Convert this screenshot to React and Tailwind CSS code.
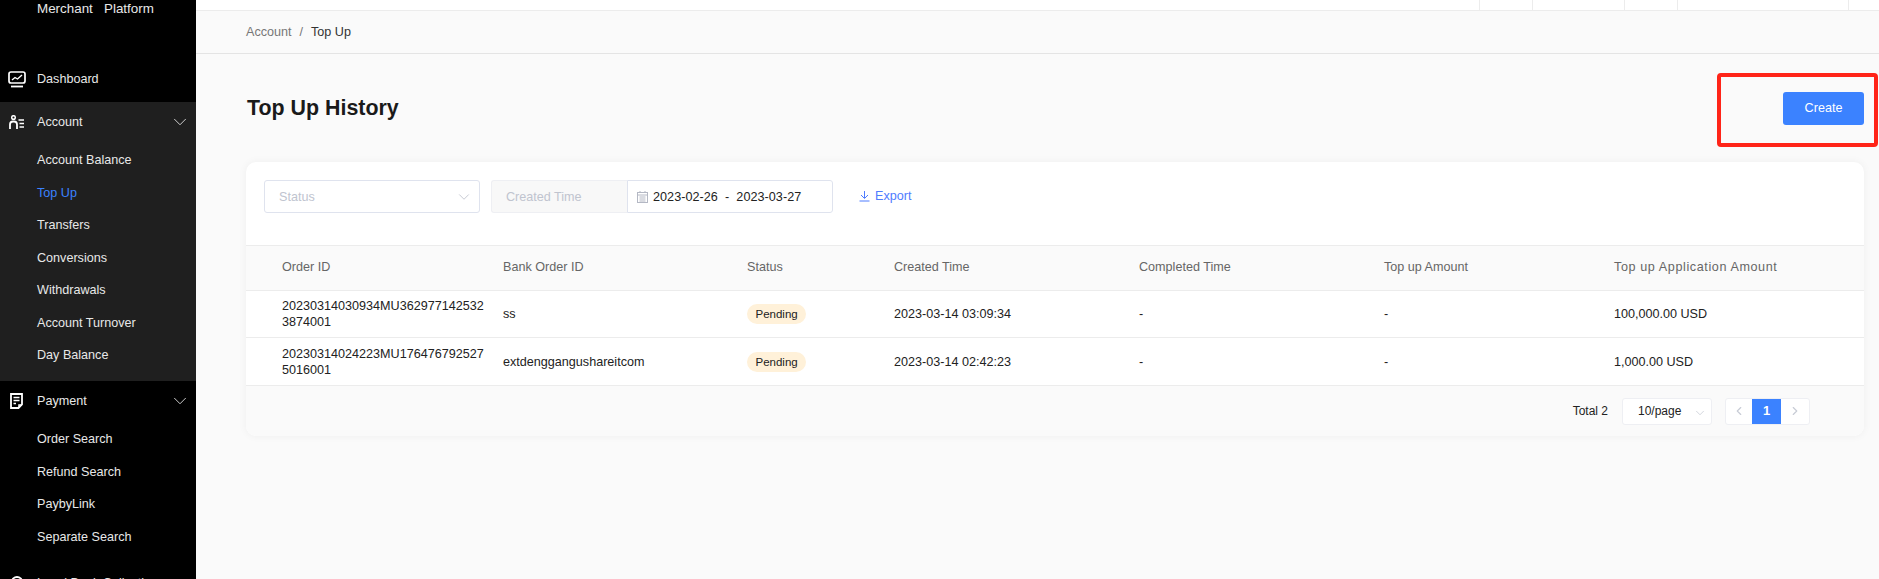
import { ChevronDown, ChevronLeft, ChevronRight } from 'lucide-react';

const FONT = "font-['Liberation_Sans',Arial,sans-serif]";

const rows = [
  { id: '20230314030934MU3629771425323874001', bank: 'ss', created: '2023-03-14 03:09:34', amount: '100,000.00 USD', height: 'h-[47px]' },
  { id: '20230314024223MU1764767925275016001', bank: 'extdenggangushareitcom', created: '2023-03-14 02:42:23', amount: '1,000.00 USD', height: 'h-[48px]' },
];

const headers = ['Order ID', 'Bank Order ID', 'Status', 'Created Time', 'Completed Time', 'Top up Amount', 'Top up Application Amount'];

const COLS = 'grid grid-cols-[257px_244px_147px_245px_245px_230px_1fr] items-center';

function DashboardIcon() {
  return (
    <svg width="18" height="17" viewBox="0 0 18 17" fill="none">
      <rect x="1" y="1" width="16" height="11" rx="2" stroke="#fff" strokeWidth="1.7" />
      <path d="M4 9 L7 6.5 L9.5 8 L14 4" stroke="#fff" strokeWidth="1.4" />
      <path d="M3 15.5 H15" stroke="#fff" strokeWidth="1.8" />
    </svg>
  );
}

function AccountIcon() {
  return (
    <svg width="15" height="14" viewBox="0 0 15 14" fill="none">
      <circle cx="4.5" cy="2.5" r="1.8" stroke="#fff" strokeWidth="1.5" />
      <path d="M1 14 V9.5 Q1 6.5 4 6.5 H5 Q8 6.5 8 9.5 V14" stroke="#fff" strokeWidth="1.8" />
      <path d="M9.5 5 H15 M10.5 8.5 H15 M10.5 12 H15" stroke="#fff" strokeWidth="1.5" />
    </svg>
  );
}

function PaymentIcon() {
  return (
    <svg width="13" height="16" viewBox="0 0 13 16" fill="none">
      <path d="M1 1 H12 V11.5 L8.5 15 H1 Z" stroke="#fff" strokeWidth="1.8" />
      <path d="M3.5 4.5 H9.5 M3.5 7.5 H9.5 M3.5 10.5 H6" stroke="#fff" strokeWidth="1.5" />
      <path d="M9 15 V12 H12" stroke="#fff" strokeWidth="1.5" />
    </svg>
  );
}

function CalendarIcon() {
  return (
    <svg width="11" height="12" viewBox="0 0 11 12" fill="none" stroke="#b4b8c4">
      <rect x="0.5" y="1.5" width="10" height="10" />
      <path d="M0.5 4 H10.5 M2.5 6 H8.5 M2.5 8 H8.5 M2.5 10 H8.5 M3 0 V2 M8 0 V2" />
    </svg>
  );
}

function SubItem({ label, active }) {
  return (
    <div className={`h-[32.5px] shrink-0 pl-[37px] pt-px flex items-center ${active ? 'text-[#3b82ff]' : 'text-[#e8e8e8]'}`}>
      {label}
    </div>
  );
}

function MenuHead({ icon, label, open }) {
  return (
    <div className="h-10 shrink-0 flex items-center text-[#e8e8e8]">
      <div className="w-[33px] mr-[4px] flex justify-center">{icon}</div>
      <span className="flex-1 pt-px">{label}</span>
      {open && <ChevronDown size={22} strokeWidth={1} className="mr-[5px] text-[#ddd]" />}
    </div>
  );
}

function Sidebar() {
  return (
    <aside className="w-[196px] shrink-0 bg-black text-[12.6px] overflow-hidden flex flex-col">
      <div className="h-[59px] shrink-0 pl-[37px] text-[#e8e8e8] pt-px text-[13.4px] leading-[16px]">Merchant&nbsp;&nbsp;&nbsp;Platform</div>
      <MenuHead icon={<DashboardIcon />} label="Dashboard" />
      <div className="h-[3px] shrink-0" />
      <div className="bg-[#1f1f1f] h-[279px] shrink-0">
        <MenuHead icon={<AccountIcon />} label="Account" open />
        <div className="pt-[2px]">
          {['Account Balance', 'Top Up', 'Transfers', 'Conversions', 'Withdrawals', 'Account Turnover', 'Day Balance'].map((l) => (
            <SubItem key={l} label={l} active={l === 'Top Up'} />
          ))}
        </div>
      </div>
      <MenuHead icon={<PaymentIcon />} label="Payment" open />
      <div className="pt-[2px] shrink-0">
        {['Order Search', 'Refund Search', 'PaybyLink', 'Separate Search'].map((l) => (
          <SubItem key={l} label={l} />
        ))}
      </div>
      <div className="mt-[10px] shrink-0">
        <MenuHead
          icon={<span className="block w-[12px] h-[14px] rounded-full border-2 border-white" />}
          label="Local Bank Collection"
        />
      </div>
    </aside>
  );
}

function TopBar() {
  return (
    <div className="h-[11px] bg-white border-b border-[#ececec] flex shrink-0">
      <div className="ml-[1283px] w-[53px] border-l border-[#ececec]" />
      <div className="w-[92px] border-l border-[#ececec]" />
      <div className="w-[53px] border-l border-[#ececec]" />
      <div className="w-[171px] border-l border-[#ececec]" />
      <div className="flex-1 border-l border-[#ececec]" />
    </div>
  );
}

function Filters() {
  return (
    <div className="h-[83px] pt-[18px] pl-[18px] flex items-start text-[12.6px]">
      <div className="w-[216px] h-[33px] rounded-[3px] border border-[#dfe3ee] flex items-center justify-between pl-[14px] pr-[6px] text-[#c0c4cf]">
        <span className="pt-px">Status</span>
        <ChevronDown size={18} strokeWidth={1} className="text-[#b4b8c4]" />
      </div>
      <div className="ml-[11px] w-[136px] h-[33px] rounded-l-[3px] border border-r-0 border-[#eeeff3] bg-[#f8f8f8] flex items-center pl-[14px] text-[#c0c4cf]">
        <span className="pt-px">Created Time</span>
      </div>
      <div className="w-[206px] h-[33px] rounded-r-[3px] border border-[#dfe3ee] flex items-center pl-[9px] text-[#222]">
        <CalendarIcon />
        <span className="ml-[5px] pt-px whitespace-pre tracking-[0.05px]">2023-02-26  -  2023-03-27</span>
      </div>
      <div className="ml-[26px] h-[31px] flex items-center text-[#4f7cff]">
        <svg width="11" height="12" viewBox="0 0 11 12" fill="none" stroke="#4f7cff">
          <path d="M5.5 1 V8 M2 5 L5.5 8.5 L9 5 M0.5 11 H10.5" />
        </svg>
        <span className="ml-[5px] pt-px">Export</span>
      </div>
    </div>
  );
}

function Table() {
  return (
    <div className="text-[12.6px]">
      <div className={`${COLS} h-[46px] pb-[2px] bg-[#fafafa] border-y border-[#ececec] text-[#666]`}>
        {headers.map((h, i) => (
          <div key={h} className={i === 0 ? 'pl-[36px]' : i === 6 ? 'tracking-[0.6px]' : ''}>{h}</div>
        ))}
      </div>
      {rows.map((r) => (
        <div key={r.id} className={`${COLS} ${r.height} bg-white border-b border-[#ececec] text-[#222] leading-[16px]`}>
          <div className="pl-[36px] pr-[16px] break-all">{r.id}</div>
          <div>{r.bank}</div>
          <div>
            <span className="inline-flex items-center h-[20px] px-[8.5px] rounded-full bg-[#fff1d9] text-[11.5px]">Pending</span>
          </div>
          <div>{r.created}</div>
          <div>-</div>
          <div>-</div>
          <div>{r.amount}</div>
        </div>
      ))}
    </div>
  );
}

function Pagination() {
  return (
    <div className="h-[50px] bg-[#fafafa] flex items-center justify-end pr-[54px] text-[12px] text-[#222]">
      <span>Total 2</span>
      <div className="ml-[14px] w-[90px] h-[27px] rounded-[3px] border border-[#eeeff3] bg-white flex items-center justify-between pl-[15px] pr-[4px]">
        <span>10/page</span>
        <ChevronDown size={14} strokeWidth={1} className="text-[#b4b8c4] mt-[3px]" />
      </div>
      <div className="ml-[13px] h-[27px] w-[85px] rounded-[3px] border border-[#eeeff3] bg-white flex items-stretch">
        <div className="w-[26px] flex items-center justify-center"><ChevronLeft size={14} className="text-[#c8ccd6]" /></div>
        <div className="w-[29px] bg-[#3b82ff] text-white font-bold flex items-center justify-center text-[13px]">1</div>
        <div className="flex-1 flex items-center justify-center"><ChevronRight size={14} className="text-[#c8ccd6]" /></div>
      </div>
    </div>
  );
}

export default function App() {
  return (
    <div className={`h-[579px] overflow-hidden flex relative ${FONT}`}>
      <Sidebar />
      <main className="flex-1 min-w-0 flex flex-col bg-[#fafafa]">
        <TopBar />
        <div className="h-[43px] shrink-0 border-b border-[#e4e4e4] flex items-center pl-[50px] text-[12.6px]">
          <span className="text-[#777]">Account</span>
          <span className="mx-[8px] text-[#777]">/</span>
          <span className="text-[#333]">Top Up</span>
        </div>
        <div className="flex-1 pl-[50px] pr-[15px]">
          <div className="h-[108px] flex items-center justify-between">
            <h1 className="font-bold text-[21.4px] pl-px text-[#1a1a1a]">Top Up History</h1>
            <button className="w-[81px] h-[33px] rounded-[3px] bg-[#3b82ff] text-white text-[12.6px]">Create</button>
          </div>
          <div className="bg-white rounded-[10px] overflow-hidden shadow-[0_0_8px_rgba(0,0,0,0.05)]">
            <Filters />
            <Table />
            <Pagination />
          </div>
        </div>
      </main>
      {/* red annotation around the button */}
      <div className="absolute left-[1717px] top-[73px] w-[161px] h-[74px] rounded-[4px] border-[4px] border-[#ff2418]" />
    </div>
  );
}
